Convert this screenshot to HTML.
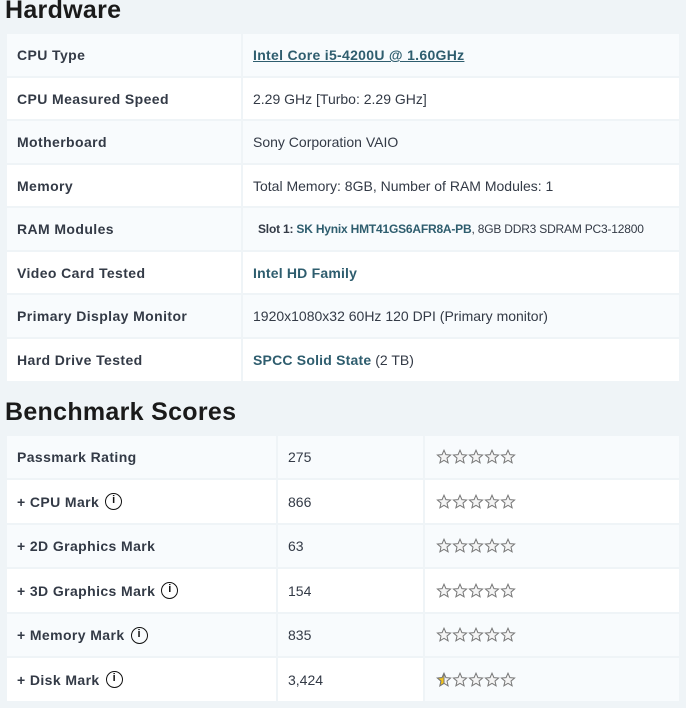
<!DOCTYPE html>
<html><head><meta charset="utf-8"><style>
body{margin:0;width:686px;height:708px;background:#eff4f7;font-family:"Liberation Sans",Arial,sans-serif;position:relative;overflow:hidden;color:#333a46}
h2{position:absolute;left:5px;margin:0;font-size:25px;font-weight:bold;color:#1a1a1a;letter-spacing:0.3px}
.r{position:absolute;left:7px;width:672px;display:flex}
.r>div{height:100%;display:flex;align-items:center;box-sizing:border-box;padding-left:10px;font-size:14px}
.r.o>div{background:#f8fbfd}.r.e>div{background:#fff}
.l{font-weight:bold;color:#333a46;letter-spacing:0.4px}
a{color:#2e5d6e;font-weight:bold}
.lk{color:#2e5d6e;font-weight:bold;letter-spacing:0.2px}
.i{display:inline-block;width:17px;height:17px;border:1.8px solid #111;border-radius:50%;box-sizing:border-box;margin-left:6px;font-size:11px;line-height:13px;text-align:center;font-weight:bold;color:#111;letter-spacing:0}
</style></head><body>
<h2 style="top:-4px">Hardware</h2>
<div class="r o" style="top:34px;height:42px"><div class="l" style="width:234px">CPU Type</div><div style="width:436px;margin-left:2px"><a href="#" style="text-decoration:underline;letter-spacing:0.3px">Intel Core i5-4200U @ 1.60GHz</a></div></div>
<div class="r e" style="top:78px;height:41px"><div class="l" style="width:234px">CPU Measured Speed</div><div style="width:436px;margin-left:2px">2.29 GHz [Turbo: 2.29 GHz]</div></div>
<div class="r o" style="top:121px;height:42px"><div class="l" style="width:234px">Motherboard</div><div style="width:436px;margin-left:2px">Sony Corporation VAIO</div></div>
<div class="r e" style="top:165px;height:41px"><div class="l" style="width:234px">Memory</div><div style="width:436px;margin-left:2px">Total Memory: 8GB, Number of RAM Modules: 1</div></div>
<div class="r o" style="top:208px;height:42px"><div class="l" style="width:234px">RAM Modules</div><div style="width:436px;margin-left:2px;font-size:12px;padding-left:15px;letter-spacing:-0.2px"><b>Slot 1:</b>&nbsp;<span class="lk" style="letter-spacing:-0.2px">SK Hynix HMT41GS6AFR8A-PB</span>, 8GB DDR3 SDRAM PC3-12800</div></div>
<div class="r e" style="top:252px;height:41px"><div class="l" style="width:234px">Video Card Tested</div><div style="width:436px;margin-left:2px"><span class="lk">Intel HD Family</span></div></div>
<div class="r o" style="top:295px;height:42px"><div class="l" style="width:234px">Primary Display Monitor</div><div style="width:436px;margin-left:2px">1920x1080x32 60Hz 120 DPI (Primary monitor)</div></div>
<div class="r e" style="top:339px;height:42px"><div class="l" style="width:234px">Hard Drive Tested</div><div style="width:436px;margin-left:2px"><span class="lk">SPCC Solid State</span>&nbsp;(2 TB)</div></div>

<h2 style="top:398px">Benchmark Scores</h2>
<svg width="0" height="0" style="position:absolute"><defs>
<symbol id="s" viewBox="0 0 16 16"><path d="M8 1.2l1.9 4.4 4.7.4-3.6 3.1 1.1 4.7L8 11.3l-4.1 2.5 1.1-4.7L1.4 6l4.7-.4z" fill="#f4f4f4" stroke="#777" stroke-width="1"/></symbol>
<symbol id="h" viewBox="0 0 16 16"><path d="M8 1.2l1.9 4.4 4.7.4-3.6 3.1 1.1 4.7L8 11.3l-4.1 2.5 1.1-4.7L1.4 6l4.7-.4z" fill="#f4f4f4" stroke="#777" stroke-width="1"/><path d="M8 1.2V11.3l-4.1 2.5 1.1-4.7L1.4 6l4.7-.4z" fill="#f5c518" stroke="#777" stroke-width="1"/></symbol>
</defs></svg>
<div class="r o" style="top:436px;height:42px"><div class="l" style="width:269px">Passmark Rating</div><div style="width:145px;margin-left:2px">275</div><div style="width:254px;margin-left:2px;padding-left:11px"><svg width="80" height="16"><use href="#s" x="0" width="16" height="16"/><use href="#s" x="16" width="16" height="16"/><use href="#s" x="32" width="16" height="16"/><use href="#s" x="48" width="16" height="16"/><use href="#s" x="64" width="16" height="16"/></svg></div></div>
<div class="r e" style="top:480px;height:43px"><div class="l" style="width:269px">+ CPU Mark<span class="i">i</span></div><div style="width:145px;margin-left:2px">866</div><div style="width:254px;margin-left:2px;padding-left:11px"><svg width="80" height="16"><use href="#s" x="0" width="16" height="16"/><use href="#s" x="16" width="16" height="16"/><use href="#s" x="32" width="16" height="16"/><use href="#s" x="48" width="16" height="16"/><use href="#s" x="64" width="16" height="16"/></svg></div></div>
<div class="r o" style="top:525px;height:42px"><div class="l" style="width:269px">+ 2D Graphics Mark</div><div style="width:145px;margin-left:2px">63</div><div style="width:254px;margin-left:2px;padding-left:11px"><svg width="80" height="16"><use href="#s" x="0" width="16" height="16"/><use href="#s" x="16" width="16" height="16"/><use href="#s" x="32" width="16" height="16"/><use href="#s" x="48" width="16" height="16"/><use href="#s" x="64" width="16" height="16"/></svg></div></div>
<div class="r e" style="top:569px;height:43px"><div class="l" style="width:269px">+ 3D Graphics Mark<span class="i">i</span></div><div style="width:145px;margin-left:2px">154</div><div style="width:254px;margin-left:2px;padding-left:11px"><svg width="80" height="16"><use href="#s" x="0" width="16" height="16"/><use href="#s" x="16" width="16" height="16"/><use href="#s" x="32" width="16" height="16"/><use href="#s" x="48" width="16" height="16"/><use href="#s" x="64" width="16" height="16"/></svg></div></div>
<div class="r o" style="top:614px;height:42px"><div class="l" style="width:269px">+ Memory Mark<span class="i">i</span></div><div style="width:145px;margin-left:2px">835</div><div style="width:254px;margin-left:2px;padding-left:11px"><svg width="80" height="16"><use href="#s" x="0" width="16" height="16"/><use href="#s" x="16" width="16" height="16"/><use href="#s" x="32" width="16" height="16"/><use href="#s" x="48" width="16" height="16"/><use href="#s" x="64" width="16" height="16"/></svg></div></div>
<div class="r e" style="top:658px;height:43px"><div class="l" style="width:269px">+ Disk Mark<span class="i">i</span></div><div style="width:145px;margin-left:2px">3,424</div><div style="width:254px;margin-left:2px;padding-left:11px;background:#f8fbfd"><svg width="80" height="16"><use href="#h" x="0" width="16" height="16"/><use href="#s" x="16" width="16" height="16"/><use href="#s" x="32" width="16" height="16"/><use href="#s" x="48" width="16" height="16"/><use href="#s" x="64" width="16" height="16"/></svg></div></div>
</body></html>
